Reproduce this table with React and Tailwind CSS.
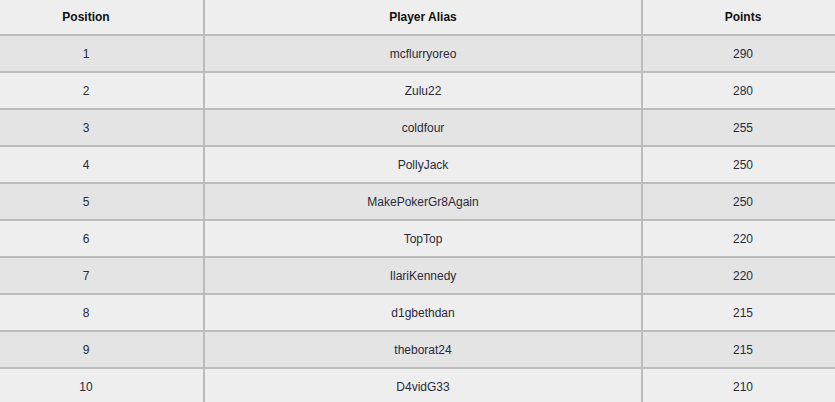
import React from "react";

const PLAYERS = [
  { pos: 1, alias: "mcflurryoreo", points: 290 },
  { pos: 2, alias: "Zulu22", points: 280 },
  { pos: 3, alias: "coldfour", points: 255 },
  { pos: 4, alias: "PollyJack", points: 250 },
  { pos: 5, alias: "MakePokerGr8Again", points: 250 },
  { pos: 6, alias: "TopTop", points: 220 },
  { pos: 7, alias: "IlariKennedy", points: 220 },
  { pos: 8, alias: "d1gbethdan", points: 215 },
  { pos: 9, alias: "theborat24", points: 215 },
  { pos: 10, alias: "D4vidG33", points: 210 },
];

function Row({ cells, header, shaded }) {
  const bg = shaded ? "bg-[#e4e4e4]" : "bg-[#eeeeee]";
  const h = header ? "h-[34px] font-bold text-[#111]" : "h-[35px] text-[#2a2a3a]";
  return (
    <div className={`flex border-b-2 border-[#bcbcbc] ${bg}`}>
      <div className={`w-[236px] shrink-0 flex items-center justify-center border-r-2 border-[#bcbcbc] ${h}`}>
        {cells[0]}
      </div>
      <div className={`w-[438px] shrink-0 flex items-center justify-center border-r-2 border-[#bcbcbc] ${h}`}>
        {cells[1]}
      </div>
      <div className={`w-[200px] shrink-0 flex items-center justify-center ${h}`}>
        {cells[2]}
      </div>
    </div>
  );
}

export default function App() {
  return (
    <div className="w-[835px] h-[402px] overflow-hidden bg-[#eeeeee] font-['Liberation_Sans',Arial,sans-serif] text-[12px]">
      <div className="ml-[-31px] w-[874px]">
        <Row header cells={["Position", "Player Alias", "Points"]} />
        {PLAYERS.map((p, i) => (
          <Row key={p.pos} shaded={i % 2 === 0} cells={[p.pos, p.alias, p.points]} />
        ))}
      </div>
    </div>
  );
}
